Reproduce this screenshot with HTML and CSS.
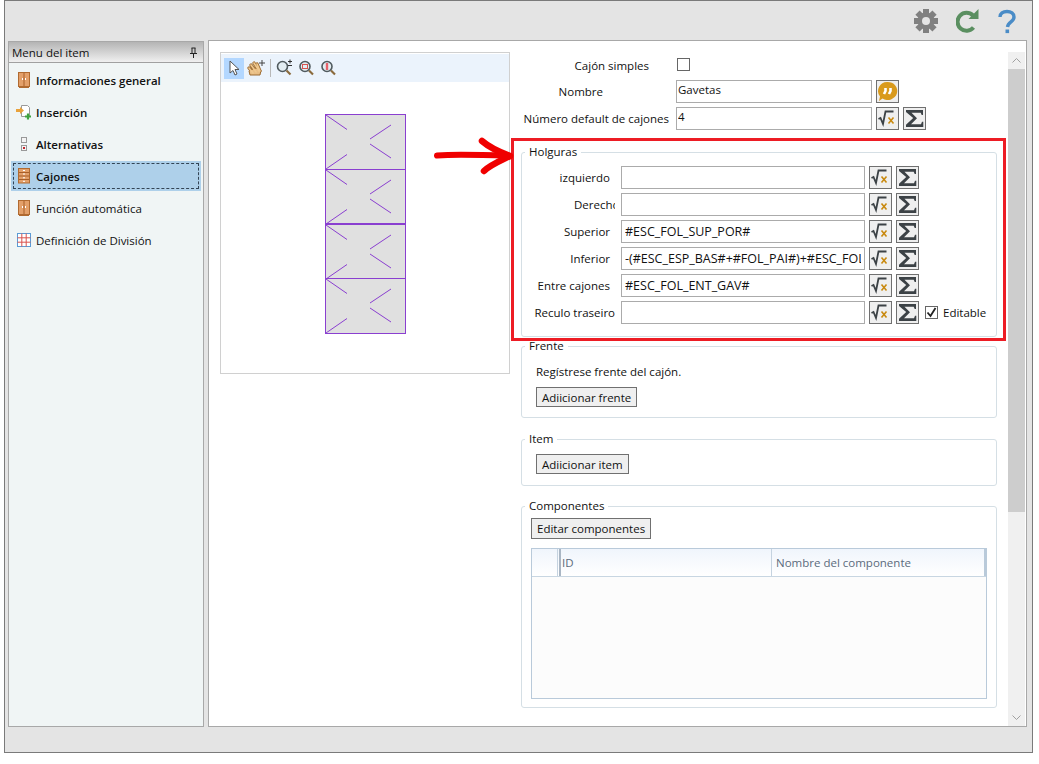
FILE: index.html
```html
<!DOCTYPE html>
<html lang="es">
<head>
    <meta charset="UTF-8">
    <title>Cajones</title>
    <link rel="stylesheet" href="styles.css">
</head>
<body>
    <svg class="icon-defs" width="0" height="0">
        <symbol id="i-sqrt" viewBox="0 0 21 21">
            <path d="M1.500 11l2-1 2.500 6 2.500-12.500h8" fill="none" stroke="#3c4246" stroke-width="1.800"/>
            <path d="M11.500 9.500l5 6M16.500 9.500l-5 6" fill="none" stroke="#c98a10" stroke-width="1.600"/>
        </symbol>
        <symbol id="i-sigma" viewBox="0 0 21 21">
            <path d="M2 2h17v5h-1.300l-1-2.200H7.500l5.500 5.400-6 6H17l1-2.400h1.300V19H2v-2.200l7.200-6.700L2 4z" fill="#3c4246"/>
        </symbol>
        <symbol id="i-wardrobe" viewBox="0 0 16 16">
            <rect x="2.500" y="0.500" width="11" height="14" fill="#e3a06a" stroke="#b06a30"/>
            <path d="M8 1v13" stroke="#a85f28"/>
            <path d="M6.500 6v2M9.500 6v2" stroke="#fff"/>
            <path d="M3 15.500h10" stroke="#b06a30"/>
        </symbol>
        <symbol id="i-drawers" viewBox="0 0 16 16">
            <rect x="2.500" y="0.500" width="11" height="14.500" fill="#e3a06a" stroke="#b06a30"/>
            <path d="M3 4.500h10M3 8h10M3 11.500h10" stroke="#a85f28"/>
            <path d="M7 2.500h2M7 6h2M7 9.800h2M7 13.300h2" stroke="#fff"/>
        </symbol>
        <symbol id="i-cell" viewBox="0 0 81 55">
            <path d="M1 1l21 14.500M45 25l21-14M45 30l21 14M1 55l21-14.500" fill="none" stroke="#8a3fd0"/>
        </symbol>
    </svg>

    <div class="window">
        <header class="topbar">
            <svg class="top-icon" width="24" height="24" viewBox="-12 -12 24 24">
                <g fill="#808080">
                    <circle r="8.500"/>
                    <rect x="-3" y="-12" width="6" height="24"/>
                    <rect x="-3" y="-12" width="6" height="24" transform="rotate(45)"/>
                    <rect x="-3" y="-12" width="6" height="24" transform="rotate(90)"/>
                    <rect x="-3" y="-12" width="6" height="24" transform="rotate(135)"/>
                </g>
                <circle r="4" fill="#e4e4e4"/>
            </svg>
            <svg class="top-icon" width="23" height="25" viewBox="0 0 23 25"><path d="M17.500 18.500a9 9 0 1 1-.5-12" fill="none" stroke="#5a8f60" stroke-width="4"/><path d="M12.500 10h10V0z" fill="#5a8f60"/></svg>
            <svg class="top-icon help" width="18" height="25" viewBox="0 0 18 25"><path d="M2 8c0-3.500 3-5.500 7-5.500s7 2 7 5.500c0 5-6 4.500-6.500 10" fill="none" stroke="#4a8cc7" stroke-width="3.400"/><rect x="7.500" y="20.500" width="3.600" height="3.600" fill="#4a8cc7"/></svg>
        </header>

        <div class="workspace">
            <aside class="sidebar">
                <div class="sidebar-title">
                    <span>Menu del item</span>
                    <svg width="9" height="11" viewBox="0 0 9 11"><path d="M2.500 1h4M3 1v5M6 1v5M1 6.500h7M4.500 7v4" fill="none" stroke="#222"/></svg>
                </div>
                <ul class="menu">
                    <li class="menu-item strong"><svg width="16" height="16"><use href="#i-wardrobe"/></svg>Informaciones general</li>
                    <li class="menu-item strong">
                        <svg width="16" height="16" viewBox="0 0 16 16"><path d="M5.500 1.500h6l2 2v9h-8z" fill="#fff" stroke="#999"/><path d="M0 5h4V3l4 3.500L4 10V8H0z" fill="#e9a23c"/><path d="M9 12.500h6M12 9.500v6" stroke="#3fa33f" stroke-width="2.200"/></svg>
                        Inserción
                    </li>
                    <li class="menu-item strong">
                        <svg width="16" height="16" viewBox="0 0 16 16"><rect x="5.500" y="1.500" width="5" height="5" fill="#f4f4f4" stroke="#999"/><rect x="5.500" y="9.500" width="5" height="5" fill="#f4f4f4" stroke="#999"/><rect x="7" y="11" width="2" height="2" fill="#c0272d"/></svg>
                        Alternativas
                    </li>
                    <li class="menu-item strong selected"><svg width="16" height="16"><use href="#i-drawers"/></svg>Cajones</li>
                    <li class="menu-item"><svg width="16" height="16"><use href="#i-wardrobe"/></svg>Función automática</li>
                    <li class="menu-item">
                        <svg width="16" height="16" viewBox="0 0 16 16"><rect x="1.500" y="1.500" width="13" height="13" fill="#fff" stroke="#5b9bd5"/><path d="M1.500 5.800h13M1.500 10.200h13M5.800 1.500v13M10.200 1.500v13" stroke="#d9534f"/></svg>
                        Definición de División
                    </li>
                </ul>
            </aside>

            <main class="main">
                <div class="content">
                    <section class="preview">
                        <div class="preview-tools">
                            <span class="tool active">
                                <svg width="14" height="17" viewBox="0 0 14 17"><path d="M3 1v12l3-2.500 2 4.500 2-1-2-4.500h4z" fill="#fff" stroke="#555"/></svg>
                            </span>
                            <span class="tool">
                                <svg width="19" height="18" viewBox="0 0 19 18">
                                    <path d="M2 9l4 5M4 6l5 7M7 4l5 8M10 5l3 7" stroke="#9c6a30" stroke-width="3.200" stroke-linecap="round"/>
                                    <path d="M3 16l-1-4 6-3 6 2-1 5z" fill="#e8bd85" stroke="#9c6a30"/>
                                    <path d="M2 9l4 5M4 6l5 7M7 4l5 8M10 5l3 7" stroke="#efc88f" stroke-width="1.600" stroke-linecap="round"/>
                                    <path d="M15 1v6M12 4h6" stroke="#444"/>
                                </svg>
                            </span>
                            <span class="tool-sep"></span>
                            <span class="tool">
                                <svg width="17" height="18" viewBox="0 0 17 18"><circle cx="6.500" cy="7.500" r="5" fill="#e3edf2" stroke="#505a5e" stroke-width="1.600"/><path d="M10.500 11.500l4 4" stroke="#8a6a3c" stroke-width="2.200"/><path d="M12 2.500h4M14 .5v4M12 6.500h4" stroke="#333"/></svg>
                            </span>
                            <span class="tool">
                                <svg width="17" height="18" viewBox="0 0 17 18"><circle cx="7" cy="7.500" r="5" fill="#e3edf2" stroke="#505a5e" stroke-width="1.600"/><path d="M11 11.500l4 4" stroke="#8a6a3c" stroke-width="2.200"/><rect x="4.500" y="5.500" width="5" height="4" fill="none" stroke="#d9534f"/></svg>
                            </span>
                            <span class="tool">
                                <svg width="17" height="18" viewBox="0 0 17 18"><circle cx="7" cy="7.500" r="5" fill="#e3edf2" stroke="#505a5e" stroke-width="1.600"/><path d="M11 11.500l4 4" stroke="#8a6a3c" stroke-width="2.200"/><path d="M7 4v7" stroke="#e8626a" stroke-width="2.400"/></svg>
                            </span>
                        </div>
                        <svg class="drawing" width="82" height="221" viewBox="0 0 82 221">
                            <rect x="0.500" y="0.500" width="80" height="219" fill="#e0e0e0" stroke="#8a3fd0"/>
                            <path d="M0 55.500h81M0 164.500h81" stroke="#8a3fd0"/>
                            <path d="M0 110h81" stroke="#8a3fd0" stroke-width="2"/>
                            <use href="#i-cell" width="81" height="55" y="0"/>
                            <use href="#i-cell" width="81" height="55" y="55"/>
                            <use href="#i-cell" width="81" height="55" y="110"/>
                            <use href="#i-cell" width="81" height="55" y="164"/>
                        </svg>
                    </section>

                    <section class="form">
                        <div class="row row-check">
                            <label class="row-label pad-simple">Cajón simples</label>
                            <span class="checkbox"></span>
                        </div>
                        <div class="row">
                            <label class="row-label pad-name">Nombre</label>
                            <input class="field field-top" type="text" value="Gavetas">
                            <button class="icon-btn">
                                <svg width="21" height="21" viewBox="0 0 21 21"><path d="M10.500 1a9.500 9 0 1 1-5 16.500L2 20l1-4.500A9 9 0 0 1 10.500 1z" fill="#d99a1c"/><path d="M8.500 7v3L7 13M13.500 7v3L12 13" fill="none" stroke="#fff" stroke-width="2.600"/></svg>
                            </button>
                        </div>
                        <div class="row">
                            <label class="row-label pad-count">Número default de cajones</label>
                            <input class="field field-top" type="text" value="4">
                            <button class="icon-btn"><svg width="21" height="21"><use href="#i-sqrt"/></svg></button>
                            <button class="icon-btn"><svg width="21" height="21"><use href="#i-sigma"/></svg></button>
                        </div>

                        <div class="highlight">
                            <fieldset class="group group-gaps">
                                <legend>Holguras</legend>
                                <div class="gap-row">
                                    <label class="gap-label">izquierdo</label>
                                    <input class="field" type="text">
                                    <button class="icon-btn"><svg width="21" height="21"><use href="#i-sqrt"/></svg></button>
                                    <button class="icon-btn"><svg width="21" height="21"><use href="#i-sigma"/></svg></button>
                                </div>
                                <div class="gap-row">
                                    <label class="gap-label wide clip">Derecho</label>
                                    <input class="field" type="text">
                                    <button class="icon-btn"><svg width="21" height="21"><use href="#i-sqrt"/></svg></button>
                                    <button class="icon-btn"><svg width="21" height="21"><use href="#i-sigma"/></svg></button>
                                </div>
                                <div class="gap-row">
                                    <label class="gap-label">Superior</label>
                                    <input class="field" type="text" value="#ESC_FOL_SUP_POR#">
                                    <button class="icon-btn"><svg width="21" height="21"><use href="#i-sqrt"/></svg></button>
                                    <button class="icon-btn"><svg width="21" height="21"><use href="#i-sigma"/></svg></button>
                                </div>
                                <div class="gap-row">
                                    <label class="gap-label">Inferior</label>
                                    <input class="field" type="text" value="-(#ESC_ESP_BAS#+#FOL_PAI#)+#ESC_FOL_INF_POR#">
                                    <button class="icon-btn"><svg width="21" height="21"><use href="#i-sqrt"/></svg></button>
                                    <button class="icon-btn"><svg width="21" height="21"><use href="#i-sigma"/></svg></button>
                                </div>
                                <div class="gap-row">
                                    <label class="gap-label">Entre cajones</label>
                                    <input class="field" type="text" value="#ESC_FOL_ENT_GAV#">
                                    <button class="icon-btn"><svg width="21" height="21"><use href="#i-sqrt"/></svg></button>
                                    <button class="icon-btn"><svg width="21" height="21"><use href="#i-sigma"/></svg></button>
                                </div>
                                <div class="gap-row">
                                    <label class="gap-label wide">Reculo traseiro</label>
                                    <input class="field" type="text">
                                    <button class="icon-btn"><svg width="21" height="21"><use href="#i-sqrt"/></svg></button>
                                    <button class="icon-btn"><svg width="21" height="21"><use href="#i-sigma"/></svg></button>
                                    <span class="checkbox checked">
                                        <svg width="11" height="11" viewBox="0 0 11 11"><path d="M1.500 5.500l3 3.500 5-8" fill="none" stroke="#222" stroke-width="1.800"/></svg>
                                    </span>
                                    <span class="check-text">Editable</span>
                                </div>
                            </fieldset>
                        </div>

                        <fieldset class="group group-front">
                            <legend>Frente</legend>
                            <p class="note">Regístrese frente del cajón.</p>
                            <button class="btn">Adiicionar frente</button>
                        </fieldset>

                        <fieldset class="group group-item">
                            <legend>Item</legend>
                            <button class="btn">Adiicionar item</button>
                        </fieldset>

                        <fieldset class="group group-comp">
                            <legend>Componentes</legend>
                            <button class="btn btn-edit">Editar componentes</button>
                            <div class="grid">
                                <div class="grid-head">
                                    <span class="col col-blank"></span>
                                    <span class="col col-id">ID</span>
                                    <span class="col col-name">Nombre del componente</span>
                                </div>
                            </div>
                        </fieldset>
                    </section>
                </div>

                <div class="scrollbar">
                    <svg width="17" height="17" viewBox="0 0 17 17"><path d="M4.500 10.500l4-4 4 4" fill="none" stroke="#a0a0a0"/></svg>
                    <div class="scroll-thumb"></div>
                    <svg class="scroll-down" width="17" height="17" viewBox="0 0 17 17"><path d="M4.500 6.500l4 4 4-4" fill="none" stroke="#a0a0a0"/></svg>
                </div>
            </main>
        </div>
    </div>

    <svg class="arrow" width="82" height="40" viewBox="0 0 82 40">
        <path d="M3 19.500 C25 18 50 19 76 20" fill="none" stroke="#f00000" stroke-width="6" stroke-linecap="round"/>
        <path d="M48 5 C56 12 68 17 76 20 C68 24 56 29 50 35" fill="none" stroke="#f00000" stroke-width="6.500" stroke-linecap="round" stroke-linejoin="round"/>
    </svg>
</body>
</html>
```

FILE: styles.css
```css
html, body {
    margin: 0;
    padding: 0;
    height: 100%;
    background-color: #fff;
}

body {
    position: relative;
    font-family: "Open Sans", "Noto Sans", sans-serif;
    font-size: 11.5px;
    color: #111;
    overflow: hidden;
}

.icon-defs {
    position: absolute;
}

.window {
    box-sizing: border-box;
    width: 1029px;
    height: 753px;
    margin-left: 4px;
    padding-bottom: 25px;
    border: 1px solid #7a7a7a;
    background-color: #e4e4e4;
    display: flex;
    flex-direction: column;
}

.topbar {
    height: 39px;
    display: flex;
    justify-content: flex-end;
    align-items: center;
    gap: 18px;
    padding-right: 16px;
}

.top-icon {
    display: block;
    margin-top: 1px;
}

.help {
    margin-left: 1px;
}

.workspace {
    flex: 1;
    display: flex;
    min-height: 0;
    padding: 0 5px 0 3px;
    gap: 4px;
}

.sidebar {
    width: 194px;
    margin-top: 1px;
    border: 1px solid #a8a8a8;
    background-color: #f0f5f5;
}

.sidebar-title {
    height: 20px;
    display: flex;
    justify-content: space-between;
    align-items: center;
    padding: 0 5px 0 3px;
    border-bottom: 1px solid #a0a0a0;
    background: linear-gradient(#b4b4b4, #f0f0f0);
}

.menu {
    list-style: none;
    margin: 2px 2px 0;
    padding: 0;
}

.menu-item {
    height: 30px;
    margin-bottom: 2px;
    padding-left: 5px;
    display: flex;
    align-items: center;
    gap: 4px;
}

.strong {
    font-weight: 600;
}

.menu-item.selected {
    background-color: #aed0ea;
    outline: 1px dashed #345;
    outline-offset: -3px;
}

.main {
    flex: 1;
    display: flex;
    min-width: 0;
    border: 1px solid #a8a8a8;
    background-color: #fff;
}

.content {
    flex: 1;
    display: flex;
    min-width: 0;
    overflow: hidden;
}

.preview {
    box-sizing: border-box;
    width: 290px;
    height: 322px;
    margin: 11px 0 0 11px;
    border: 1px solid #d0d0d0;
}

.preview-tools {
    height: 28px;
    margin-top: 1px;
    padding-left: 3px;
    display: flex;
    align-items: center;
    gap: 2px;
    background-color: #ebf3fc;
}

.tool {
    width: 20px;
    height: 21px;
    display: flex;
    justify-content: center;
    align-items: center;
}

.tool.active {
    background-color: #b3d7ff;
}

.tool-sep {
    width: 1px;
    height: 18px;
    margin: 0 1px 0 2px;
    background-color: #b8b8b8;
}

.drawing {
    display: block;
    margin: 32px 0 0 104px;
}

.form {
    width: 495px;
    margin-left: 1px;
    padding-top: 14px;
}

.row {
    display: flex;
    align-items: center;
    gap: 4px;
    height: 23px;
    margin-bottom: 4px;
}

.row-check {
    height: 19px;
    margin-bottom: 6px;
}

.row-label {
    box-sizing: border-box;
    width: 165px;
    margin-right: -4px;
    text-align: right;
    white-space: nowrap;
}

.pad-simple {
    padding: 2px 27px 0 0;
}

.pad-name {
    padding-right: 73px;
}

.pad-count {
    padding-right: 7px;
}

.checkbox {
    box-sizing: border-box;
    width: 13px;
    height: 13px;
    border: 1px solid #666;
    background-color: #fff;
    display: inline-flex;
    justify-content: center;
    align-items: center;
}

.row-check .checkbox {
    margin-left: 1px;
}

.field {
    box-sizing: border-box;
    flex: 1;
    min-width: 0;
    height: 23px;
    padding: 0 3px;
    border: 1px solid #ababab;
    background-color: #fff;
    font: inherit;
    color: #111;
    outline: none;
}

.row .field {
    flex: none;
    width: 196px;
}

.field-top {
    padding: 0 2px 4px 1px;
}

.icon-btn {
    box-sizing: border-box;
    flex: none;
    width: 23px;
    height: 23px;
    padding: 0;
    border: 1px solid #707070;
    background-color: #efefef;
    display: flex;
    justify-content: center;
    align-items: center;
}

.highlight {
    box-sizing: border-box;
    width: 495px;
    height: 203px;
    margin-top: 8px;
    padding: 3px 6px 0 7px;
    border: 3px solid #ed1c24;
}

.group {
    box-sizing: border-box;
    margin: 0;
    padding: 0;
    border: 1px solid #d5dfe5;
    border-radius: 3px;
    min-width: 0;
}

.group legend {
    margin-left: 3px;
    padding: 0 4px;
    line-height: 16px;
}

.group-gaps {
    width: 476px;
    height: 193px;
    padding: 6px 0 0 0;
}

.gap-row {
    display: flex;
    align-items: center;
    height: 23px;
    margin-bottom: 4px;
    gap: 4px;
}

.gap-row .field {
    flex: none;
    width: 244px;
    margin-left: 11px;
    font-size: 12.5px;
}

.gap-label {
    box-sizing: border-box;
    width: 88px;
    margin-right: -4px;
    text-align: right;
    white-space: nowrap;
}

.wide {
    width: 93px;
    margin-right: -9px;
}

.clip {
    padding-left: 52px;
    text-align: left;
    overflow: hidden;
}

.gap-row .checkbox {
    margin-left: 2px;
}

.check-text {
    margin-left: 1px;
}

.group-front {
    width: 476px;
    height: 80px;
    margin: -3px 0 0 10px;
    padding: 10px 0 0 14px;
}

.group-front legend,
.group-item legend {
    margin-left: -11px;
}

.note {
    margin: 0 0 7px;
    line-height: 16px;
}

.btn {
    display: block;
    box-sizing: border-box;
    height: 20px;
    padding: 0 5px;
    border: 1px solid #707070;
    background-color: #efefef;
    font: inherit;
    color: #111;
}

.group-item {
    width: 476px;
    height: 55px;
    margin: 13px 0 0 10px;
    padding: 7px 0 0 14px;
}

.group-comp {
    width: 476px;
    height: 210px;
    margin: 12px 0 0 10px;
    padding: 4px 9px 0;
}

.group-comp legend {
    margin-left: -6px;
}

.btn-edit {
    height: 21px;
}

.grid {
    box-sizing: border-box;
    height: 151px;
    margin-top: 9px;
    border: 1px solid #b9cada;
    background-color: #fcfcfc;
}

.grid-head {
    height: 27px;
    display: flex;
    border-bottom: 1px solid #c8d6e2;
    background: linear-gradient(#f0f5fc, #fff);
}

.col {
    box-sizing: border-box;
    display: flex;
    align-items: center;
    padding-left: 4px;
    color: #5b6b7c;
}

.col-blank {
    width: 26px;
    border-right: 1px solid #c5d3e0;
}

.col-id {
    width: 213px;
    padding-left: 1px;
    border-left: 2px solid #a9b6c4;
    margin-left: 1px;
    border-right: 1px solid #c5d3e0;
}

.col-name {
    flex: 1;
    border-right: 2px solid #b9cada;
}

.scrollbar {
    position: relative;
    width: 17px;
    margin: 11px 1px 0 0;
    background-color: #f0f0f0;
    display: flex;
    flex-direction: column;
}

.scroll-thumb {
    height: 443px;
    background-color: #cdcdcd;
}

.scroll-down {
    margin-top: auto;
}

/* arrow drawn on top of the screenshot */
.arrow {
    position: absolute;
    left: 434px;
    top: 136px;
}
```
